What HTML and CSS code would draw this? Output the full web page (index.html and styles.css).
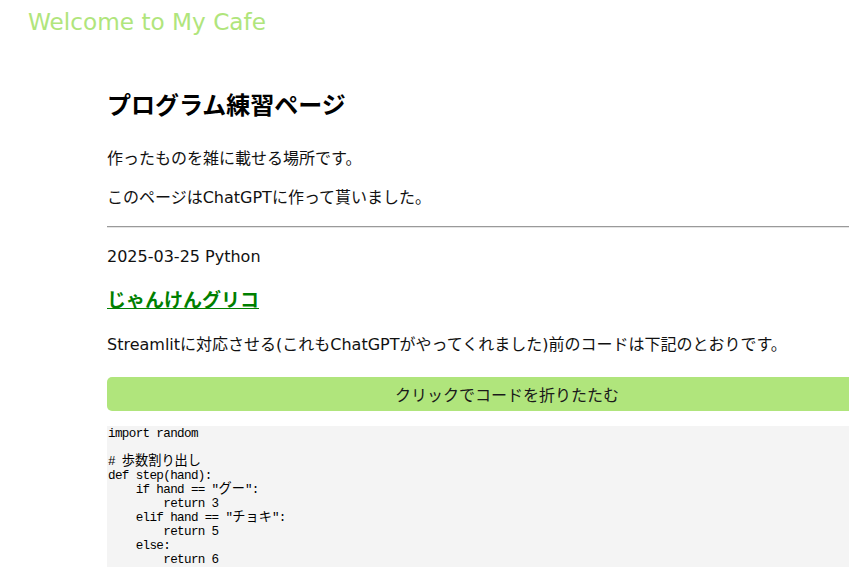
FILE: index.html
```html
<!DOCTYPE html>
<html lang="ja">
<head>
<meta charset="utf-8">
<title>Welcome to My Cafe</title>
<link rel="stylesheet" href="styles.css">
</head>
<body>
<header class="site-header">
  <div class="site-title">Welcome to My Cafe</div>
</header>
<main class="content">
  <h1 class="page-title">プログラム練習ページ</h1>
  <p class="intro first">作ったものを雑に載せる場所です。</p>
  <p class="intro">このページはChatGPTに作って貰いました。</p>
  <hr class="divider">
  <article class="post">
    <p class="post-meta">2025-03-25 Python</p>
    <h2 class="post-title"><a href="#">じゃんけんグリコ</a></h2>
    <p class="post-desc">Streamlitに対応させる(これもChatGPTがやってくれました)前のコードは下記のとおりです。</p>
    <button class="toggle" type="button">クリックでコードを折りたたむ</button>
    <pre class="code">import random

# <span class="w">歩数割り出し</span>
def step(hand):
    if hand == "<span class="w">グー</span>":
        return 3
    elif hand == "<span class="w">チョキ</span>":
        return 5
    else:
        return 6
</pre>
  </article>
</main>
</body>
</html>
```
FILE: styles.css
```css
html {
  overflow: hidden;
}
body {
  margin: 0;
  background: #ffffff;
  color: #111111;
  font-family: "DejaVu Sans", "Noto Sans CJK JP", sans-serif;
}
.site-header {
  padding: 8px 28px 0;
}
.site-title {
  font-size: 23.2px;
  line-height: 28px;
  color: #b0e57c;
}
.content {
  width: 800px;
  margin-left: 107px;
  padding-top: 55px;
}
.page-title {
  margin: 0;
  font-size: 24px;
  line-height: 30px;
  font-weight: bold;
  color: #000000;
}
.intro {
  margin: 16px 0 0;
  font-size: 16px;
  line-height: 23px;
}
.intro.first {
  margin-top: 26px;
}
.divider {
  margin: 17px 0 0;
  height: 0;
  border: none;
  border-top: 1px solid #9a9a9a;
  border-bottom: 1px solid #e4e4e4;
}
.post-meta {
  margin: 17px 0 0;
  font-size: 16px;
  line-height: 23px;
}
.post-title {
  margin: 18px 0 0;
  font-size: 19px;
  line-height: 28px;
  font-weight: bold;
}
.post-title a {
  color: #008000;
  text-decoration: underline;
}
.post-desc {
  margin: 19px 0 0;
  font-size: 16px;
  line-height: 23px;
}
.toggle {
  display: block;
  width: 100%;
  height: 34px;
  margin-top: 21px;
  border: none;
  border-radius: 5px;
  background: #b0e57c;
  color: #1a1a1a;
  font-family: "DejaVu Sans", "Noto Sans CJK JP", sans-serif;
  font-size: 16px;
  padding: 0;
}
.code {
  margin: 15px 0 0;
  padding: 1px 1px 0;
  background: #f4f4f4;
  font-family: "Liberation Mono", "Noto Sans CJK JP", monospace;
  font-size: 12.6px;
  letter-spacing: -0.65px;
  line-height: 14px;
  color: #000000;
}
.code .w {
  font-family: "Noto Sans CJK JP", sans-serif;
  font-size: 13.2px;
  letter-spacing: 0;
  line-height: 9px;
}
```
